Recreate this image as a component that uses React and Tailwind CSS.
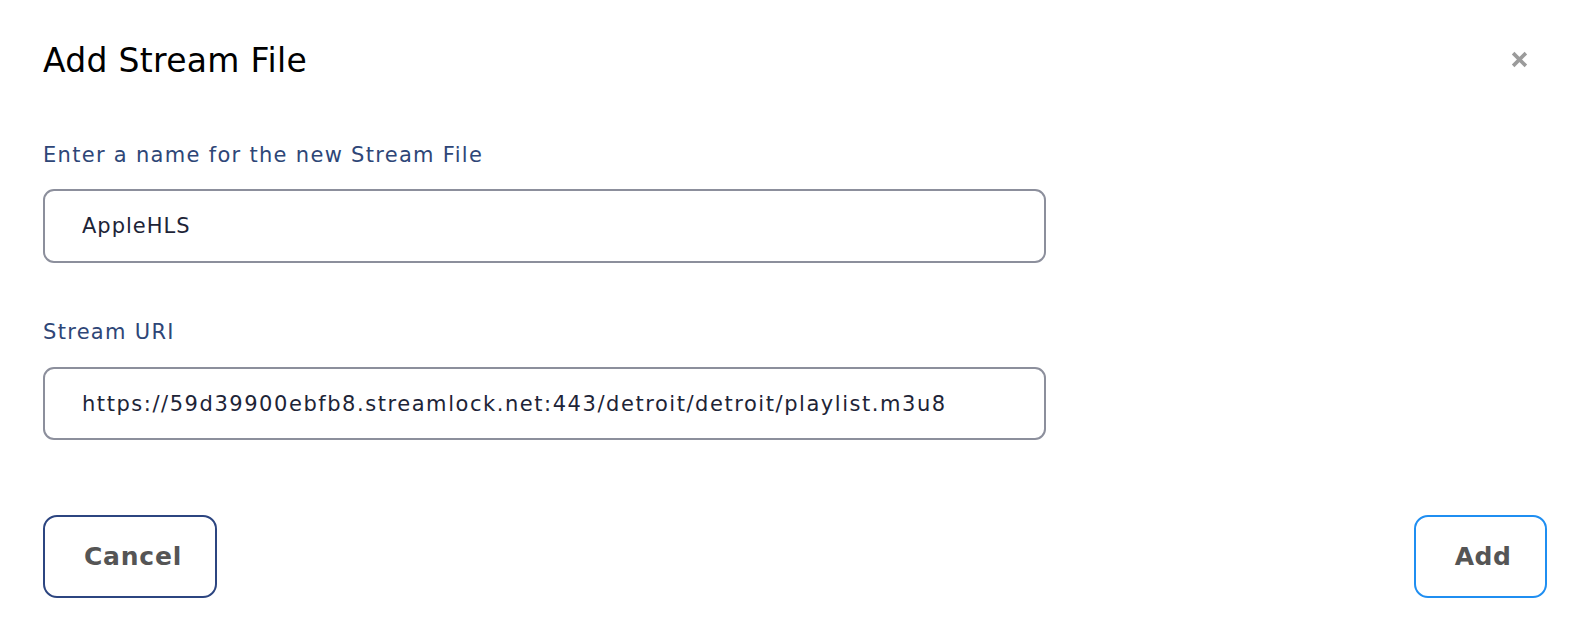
import React, { useState } from 'react';

export default function App() {
    const [name, setName] = useState('AppleHLS');
    const [uri, setUri] = useState('https://59d39900ebfb8.streamlock.net:443/detroit/detroit/playlist.m3u8');

    return (
        <div className="w-[1590px] h-[624px] bg-white px-[43px] pt-[40px] font-['DejaVu_Sans','Noto_Sans',sans-serif]">
            <div className="flex items-start justify-between">
                <h2 className="text-[33px] leading-[42px] tracking-[0.3px] font-normal text-black">Add Stream File</h2>
                <button className="mt-[10px] mr-[19px] w-[18px] h-[18px] flex items-center justify-center text-[#9b9b9b]">
                    <svg width="17" height="17" viewBox="0 0 16 16">
                        <path d="M2 2 L14 14 M14 2 L2 14" stroke="currentColor" strokeWidth="3.4" strokeLinecap="butt" />
                    </svg>
                </button>
            </div>

            <div className="w-[1003px] mt-[59px]">
                <label className="block text-[21px] leading-[28px] tracking-[1.3px] text-[#2e4677]">Enter a name for the new Stream File</label>
                <input
                    value={name}
                    onChange={e => setName(e.target.value)}
                    className="mt-[20px] w-full h-[74px] px-[37px] rounded-[11px] border-2 border-[#8c8f9c] text-[21px] tracking-[1px] text-[#1d2437] outline-none"
                />

                <label className="block mt-[55px] text-[21px] leading-[28px] tracking-[1.3px] text-[#2e4677]">Stream URI</label>
                <input
                    value={uri}
                    onChange={e => setUri(e.target.value)}
                    className="mt-[21px] w-full h-[73px] px-[37px] rounded-[11px] border-2 border-[#8c8f9c] text-[21px] tracking-[1.55px] text-[#1d2437] outline-none"
                />
            </div>

            <div className="flex justify-between mt-[75px]">
                <button className="w-[174px] h-[83px] pl-[6px] rounded-[14px] border-2 border-[#2c4580] text-[25px] tracking-[0.8px] font-bold text-[#555555]">Cancel</button>
                <button className="w-[133px] h-[83px] pl-[5px] rounded-[14px] border-2 border-[#1f8ef1] text-[25px] tracking-[0.5px] font-bold text-[#555555]">Add</button>
            </div>
        </div>
    );
}
